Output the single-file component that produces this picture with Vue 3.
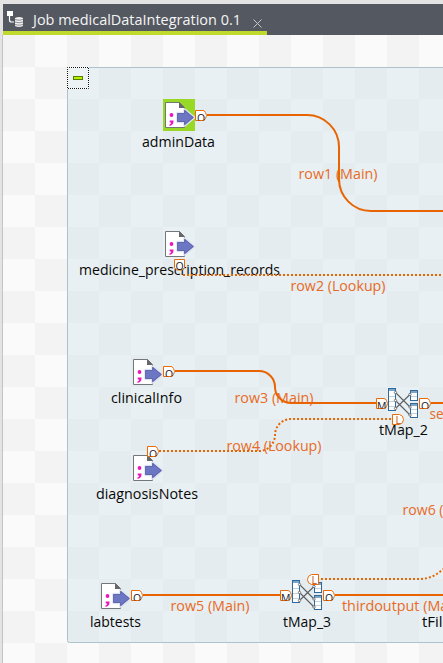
<script setup>
const files = [
  { x: 165, y: 102, active: true },
  { x: 165, y: 231 },
  { x: 133, y: 359 },
  { x: 133, y: 455 },
  { x: 101, y: 583 },
]
const maps = [
  { x: 388, y: 388 },
  { x: 292, y: 580 },
]
const labels = [
  { t: 'adminData', x: 142, y: 147, w: 73 },
  { t: 'medicine_prescription_records', x: 79, y: 275, w: 201 },
  { t: 'clinicalInfo', x: 111, y: 403, w: 71 },
  { t: 'diagnosisNotes', x: 96, y: 499, w: 102 },
  { t: 'labtests', x: 90, y: 627, w: 51 },
  { t: 'tMap_2', x: 379, y: 435, w: 49 },
  { t: 'tMap_3', x: 283, y: 627, w: 48 },
  { t: 'tFile', x: 422, y: 627, w: 29 },
]
const rows = [
  { t: 'row1 (Main)', x: 298.5, y: 179, w: 79 },
  { t: 'row2 (Lookup)', x: 290.5, y: 291, w: 95 },
  { t: 'row3 (Main)', x: 234.5, y: 403, w: 79 },
  { t: 'row4 (Lookup)', x: 226.5, y: 451, w: 95 },
  { t: 'row5 (Main)', x: 170.5, y: 611, w: 79 },
  { t: 'row6 (', x: 402.5, y: 515, w: 41 },
  { t: 'se', x: 429.5, y: 419, w: 14 },
  { t: 'thirdoutput (Main)', x: 342, y: 611, w: 123 },
]
const ports = [
  { k: 'O', x: 195, y: 110 },
  { k: 'O', x: 163, y: 366 },
  { k: 'O', x: 147, y: 446 },
  { k: 'O', x: 131, y: 590 },
  { k: 'O', x: 419, y: 398 },
  { k: 'O', x: 323, y: 590 },
  { k: 'M', x: 376, y: 398 },
  { k: 'M', x: 280, y: 590 },
]
</script>

<template>
  <div class="editor">
    <header class="tabs">
      <div class="tab">
        <svg class="job" width="18" height="18" viewBox="0 0 18 18">
          <path d="M1 1h6v5H1z" fill="#fff" />
          <path d="M3.5 6v4q0 2 2 2H8" fill="none" stroke="#fff" stroke-width="1.2" />
          <path d="M9 8q4-2 8 0v8q-4 2-8 0z" fill="#eee" />
          <path d="M9 9.5q4 1.500 8 0M9 12q4 1.500 8 0M9 14.500q4 1.500 8 0" fill="none" stroke="#777b82" stroke-width=".8" />
        </svg>
        <svg class="title" width="212" height="30">
          <text x="0" y="21" textLength="208" lengthAdjust="spacingAndGlyphs">Job medicalDataIntegration 0.1</text>
        </svg>
        <svg class="close" width="9" height="9" viewBox="0 0 9 9"><path d="M.5.5l8 8M8.500.5l-8 8" stroke="#c4c6ca" /></svg>
      </div>
    </header>

    <svg class="canvas" width="440" height="628" viewBox="3 35 440 628">
      <defs>
        <pattern id="checks" x="3" y="35" width="64" height="64" patternUnits="userSpaceOnUse">
          <rect width="64" height="64" fill="#fafafa" />
          <path d="M0 0h32v32H0zM32 32h32v32H32z" fill="#f3f3f3" />
        </pattern>
        <pattern id="subchecks" x="3" y="35" width="64" height="64" patternUnits="userSpaceOnUse">
          <rect width="64" height="64" fill="#e8f0f3" />
          <path d="M0 0h32v32H0zM32 32h32v32H32z" fill="#e4ecef" />
        </pattern>
        <g id="file">
          <path d="M.5.5h14l5 5v20H.5z" fill="#fff" stroke="#747678" />
          <path d="M14 0l6 6h-6z" fill="#66686a" />
          <circle cx="6.500" cy="13" r="1.900" fill="#ec14c4" />
          <path d="M4.700 18.500h3.800q.3 4.500-4 5.500v-1.500q1.700-.6 1.700-2H4.700z" fill="#ec14c4" />
          <path d="M12.500 11h7V7.500l9.500 8-9.500 8V20h-7z" fill="#6c76c2" stroke="#dfe2f0" stroke-width="2.500" stroke-linejoin="round" paint-order="stroke" />
          <path d="M12.500 11.500h7V8.500l8.500 7-8.500 7v-3h-7z" fill="#6c76c2" stroke="#5a62a8" stroke-width=".8" />
        </g>
        <g id="map">
          <rect x=".5" y=".5" width="7" height="22" fill="#fff" stroke="#2f699c" />
          <path d="M1 1h6v2H1z" fill="#7da5c5" />
          <path d="M1 8.500h6M1 13.500h6M1 18.500h6" stroke="#c5cfd6" />
          <g fill="#fff" stroke="#2f699c">
            <rect x="22.500" y="2.500" width="7" height="10" />
            <rect x="22.500" y="15.500" width="7" height="14" />
          </g>
          <path d="M23 3h6v2h-6zM23 16h6v2h-6z" fill="#7da5c5" />
          <path d="M23 8.500h6M23 21.500h6M23 25.500h6" stroke="#c5cfd6" />
          <path d="M7.500 4.500L22 19M7.500 12.500L22 27M7.500 20.500L22 6.500" stroke="#5c6065" stroke-width="1.100" />
          <g fill="#fff" stroke="#5c6065" stroke-width=".8">
            <circle cx="7.500" cy="4.500" r="1.200" /><circle cx="7.500" cy="12.500" r="1.200" /><circle cx="7.500" cy="20.500" r="1.200" />
            <circle cx="22" cy="6.500" r="1.200" /><circle cx="22" cy="19" r="1.200" /><circle cx="22" cy="27" r="1.200" />
          </g>
        </g>
        <path id="port" d="M.5.5H8q1.500 0 2.500 2l1 3-1 3Q9.500 10.500 8 10.500H.5z" fill="#fff" stroke="#e86a08" />
        <clipPath id="portclip"><path d="M0 0h12v10.500H0z" /></clipPath>
      </defs>

      <rect x="3" y="35" width="440" height="628" fill="url(#checks)" />
      <rect x="67.500" y="67.500" width="400" height="575" rx="2" fill="url(#subchecks)" stroke="#adc2cd" />
      <rect x="67.500" y="67.500" width="21" height="21" fill="#edf3f5" stroke="#fff" />
      <rect x="67.500" y="67.500" width="21" height="21" fill="none" stroke="#111" stroke-dasharray="1 1" stroke-dashoffset=".5" />
      <rect x="73.500" y="76.500" width="9" height="3" fill="#b4f000" stroke="#587d00" />

      <rect x="163" y="99" width="32" height="32" fill="#98d926" />
      <use v-for="f in files" :key="f.y" href="#file" :x="f.x" :y="f.y" />
      <use v-for="m in maps" :key="m.y" href="#map" :x="m.x" :y="m.y" />

      <g class="label">
        <text v-for="l in labels" :key="l.t" :x="l.x" :y="l.y" :textLength="l.w" lengthAdjust="spacingAndGlyphs">{{ l.t }}</text>
      </g>
      <g class="row">
        <text v-for="r in rows" :key="r.t" :x="r.x" :y="r.y" :textLength="r.w" lengthAdjust="spacingAndGlyphs">{{ r.t }}</text>
      </g>

      <g class="wire">
        <path d="M207 115H307A32 32 0 0 1 339 147V179A32 32 0 0 0 371 211H443" />
        <path d="M175 371H259A16 16 0 0 1 275 387A16 16 0 0 0 291 403H376" />
        <path d="M431 403H443M143 595H280M335 595H443" />
      </g>
      <g class="wire lookup">
        <path d="M183 275H443" />
        <path d="M159 451H259A16 16 0 0 0 275 435A16 16 0 0 1 291 419H392" />
        <path d="M321 579H419Q433 579 443 569" />
      </g>

      <g v-for="p in ports" :key="p.x + '-' + p.y" :transform="`translate(${p.x} ${p.y})`">
        <use href="#port" />
        <g clip-path="url(#portclip)"><text class="letter" :x="p.k === 'O' ? 2 : 1" y="11.500">{{ p.k }}</text></g>
      </g>
      <path d="M174.500 259.500h10v8l-2 2.500h-6l-2-2.500z" fill="#fff" stroke="#e86a08" />
      <text class="letter" x="175.500" y="270">O</text>
      <path d="M392.500 414.500h7q4 1 4 5t-4 5h-7z" fill="#fff" stroke="#e86a08" />
      <text class="letter tinted" x="395.500" y="424">L</text>
      <path d="M318.500 574.500h-7q-4 1-4 5t4 5h7z" fill="#fff" stroke="#e86a08" />
      <text class="letter tinted" x="311.500" y="584">L</text>
    </svg>
  </div>
</template>

<style>
body { margin: 0; overflow: hidden; }
</style>

<style scoped>
.editor {
  box-sizing: border-box;
  width: 443px;
  height: 663px;
  padding: 4px 0 0 2px;
  background: #e3e3e3;
  font-family: "Open Sans", "Noto Sans", sans-serif;
  font-weight: 370;
  overflow: hidden;
}
.tabs {
  height: 31px;
  margin-left: 1px;
  background: #545861;
}
.tab {
  box-sizing: border-box;
  display: flex;
  width: 264px;
  height: 31px;
  border-bottom: 4px solid #c1d82c;
}
.job { margin: 6px 0 0 3px; }
.title { margin-left: 8.500px; flex: none; overflow: visible; }
.title text { fill: #f5f5f5; font-size: 15px; }
.close { margin: 15px 0 0 8.500px; }
.canvas {
  display: block;
  box-sizing: content-box;
  border-left: 1px solid #c4c4c4;
}
.label text { fill: #080808; font-size: 14.5px; }
.row text { fill: #e86a25; font-size: 14.5px; }
.wire { fill: none; stroke: #e86400; stroke-width: 2; }
.lookup { stroke-dasharray: 2 2; }
.letter { fill: #15151c; font-size: 10.500px; }
.tinted { fill: #c04a10; }
</style>
